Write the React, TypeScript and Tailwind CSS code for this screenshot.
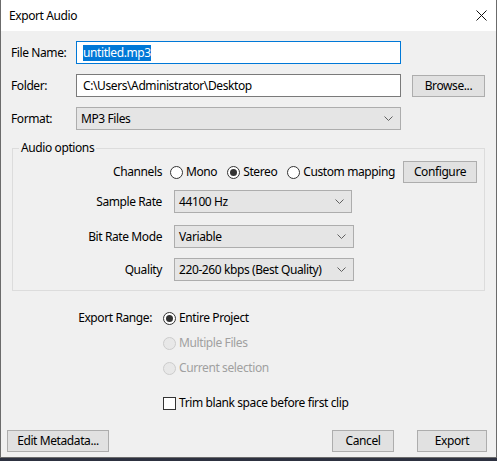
import { useState } from 'react';

const font = { fontFamily: '"Noto Sans", "Segoe UI", sans-serif' };

function Chevron() {
  return (
    <svg width="9" height="5" viewBox="0 0 9 5" className="shrink-0">
      <path d="M0.5 0.5 L4.5 4.5 L8.5 0.5" fill="none" stroke="#606060" strokeWidth="1" />
    </svg>
  );
}

function Radio({ label, checked, disabled }: { label: string; checked?: boolean; disabled?: boolean }) {
  return (
    <div className={`flex items-center gap-[3px] whitespace-nowrap ${disabled ? 'text-[#a0a0a0]' : 'text-black'}`}>
      <span
        className={`flex h-[13px] w-[13px] items-center justify-center rounded-full border ${
          disabled ? 'border-[#cccccc] bg-[#e8e8e8]' : 'border-[#333333] bg-white'
        }`}
      >
        {checked && <span className="h-[7px] w-[7px] rounded-full bg-[#333333]" />}
      </span>
      <span>{label}</span>
    </div>
  );
}

function Select({ value, width }: { value: string; width: string }) {
  return (
    <div className={`flex h-[23px] items-center justify-between border border-[#adadad] bg-[#e5e5e5] pl-[4px] pr-[7px] ${width}`}>
      <span>{value}</span>
      <Chevron />
    </div>
  );
}

function Button({ label, width }: { label: string; width: string }) {
  return (
    <button className={`flex h-[22px] items-center justify-center border border-[#adadad] bg-[#e1e1e1] ${width}`}>
      {label}
    </button>
  );
}

export default function App() {
  const [trim, setTrim] = useState(false);

  return (
    <div style={font} className="flex h-[461px] w-[497px] flex-col bg-[#2d3140] text-[12px] tracking-[-0.4px] text-black">
      <div className="flex h-[458px] flex-col border-x border-b border-[#6b6b6b] bg-[#f0f0f0]">
        {/* title bar */}
        <div className="flex h-[31px] shrink-0 items-center justify-between bg-white pl-[8px] pr-[9px]">
          <span>Export Audio</span>
          <svg width="11" height="11" viewBox="0 0 11 11">
            <path d="M0.5 0.5 L10.5 10.5 M10.5 0.5 L0.5 10.5" stroke="#111" strokeWidth="1" />
          </svg>
        </div>

        {/* file rows */}
        <div className="flex flex-col gap-[10px] pl-[10px] pt-[10px]">
          <div className="flex items-center">
            <span className="w-[65px]">File Name:</span>
            <div className="flex h-[23px] w-[325px] items-center border border-[#0078d7] bg-white pl-[6px]">
              <span className="bg-[#0078d7] leading-[16px] text-white">untitled.mp3</span>
            </div>
          </div>
          <div className="flex items-center">
            <span className="w-[65px]">Folder:</span>
            <div className="flex h-[23px] w-[325px] items-center border border-[#7a7a7a] bg-white pl-[6px]">
              C:\Users\Administrator\Desktop
            </div>
            <div className="ml-[11px]">
              <Button label="Browse..." width="w-[73px]" />
            </div>
          </div>
          <div className="flex items-center">
            <span className="w-[65px]">Format:</span>
            <Select value="MP3 Files" width="w-[325px]" />
          </div>
        </div>

        {/* audio options */}
        <fieldset className="mx-[11px] mt-[10px] h-[151px] border border-[#dcdcdc]">
          <legend className="ml-[6px] px-[2px] leading-[16px]">Audio options</legend>
          <div className="mt-[5px] flex h-[22px] items-center">
            <span className="w-[149px] text-right">Channels</span>
            <div className="ml-[8px] flex items-center gap-[10px]">
              <Radio label="Mono" />
              <Radio label="Stereo" checked />
              <Radio label="Custom mapping" />
            </div>
            <div className="ml-auto mr-[7px]">
              <Button label="Configure" width="w-[74px]" />
            </div>
          </div>
          <div className="mt-[7px] flex items-center">
            <span className="w-[149px] text-right">Sample Rate</span>
            <div className="ml-[12px]">
              <Select value="44100 Hz" width="w-[178px]" />
            </div>
          </div>
          <div className="mt-[12px] flex items-center">
            <span className="w-[149px] text-right">Bit Rate Mode</span>
            <div className="ml-[12px]">
              <Select value="Variable" width="w-[180px]" />
            </div>
          </div>
          <div className="mt-[10px] flex items-center">
            <span className="w-[149px] text-right">Quality</span>
            <div className="ml-[12px]">
              <Select value="220-260 kbps (Best Quality)" width="w-[180px]" />
            </div>
          </div>
        </fieldset>

        {/* export range */}
        <div className="mt-[18px] flex">
          <span className="w-[151px] text-right">Export Range:</span>
          <div className="ml-[11px] flex flex-col gap-[7px]">
            <Radio label="Entire Project" checked />
            <Radio label="Multiple Files" disabled />
            <Radio label="Current selection" disabled />
          </div>
        </div>
        <label className="ml-[162px] mt-[17px] flex cursor-default items-center gap-[3px]">
          <input type="checkbox" className="hidden" checked={trim} onChange={(e) => setTrim(e.target.checked)} />
          <span className="h-[13px] w-[13px] border border-[#333333] bg-white" />
          <span>Trim blank space before first clip</span>
        </label>

        {/* bottom buttons */}
        <div className="mt-auto flex items-center pb-[5px] pl-[6px] pr-[9px]">
          <Button label="Edit Metadata..." width="w-[102px]" />
          <div className="ml-auto flex gap-[23px]">
            <Button label="Cancel" width="w-[62px]" />
            <Button label="Export" width="w-[70px]" />
          </div>
        </div>
      </div>
    </div>
  );
}
